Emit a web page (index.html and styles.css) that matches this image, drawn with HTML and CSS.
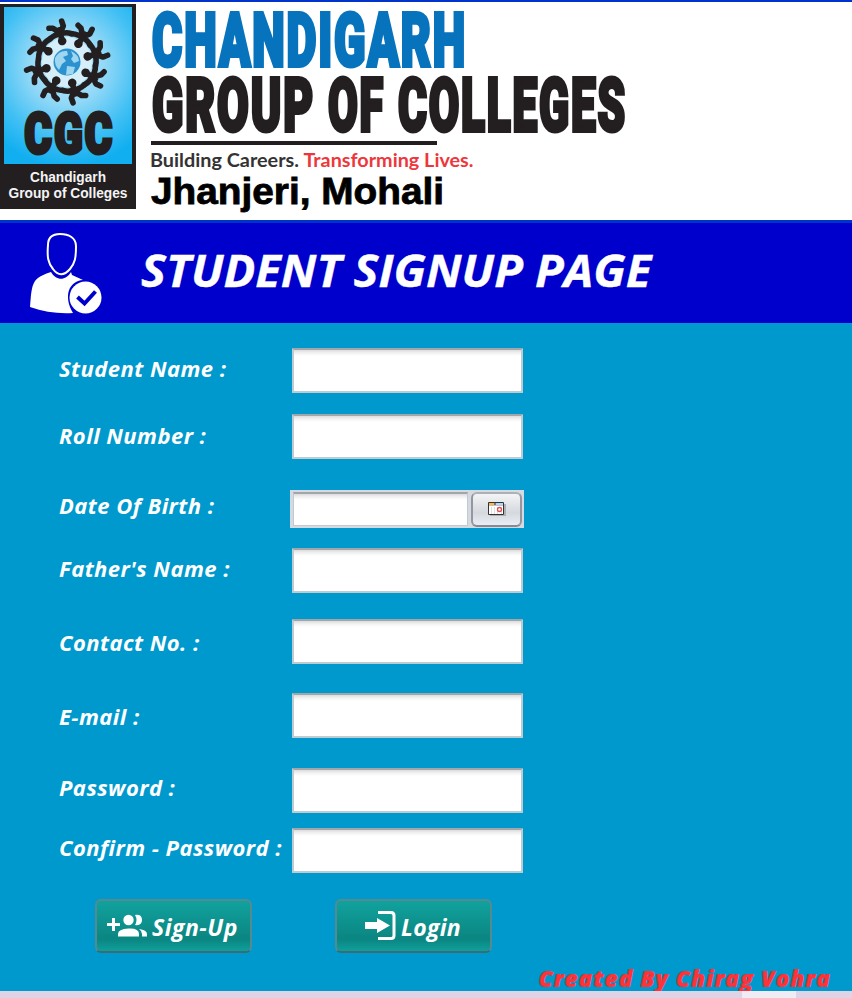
FILE: index.html
```html
<!DOCTYPE html>
<html lang="en">
<head>
<meta charset="utf-8">
<title>Student Signup Page</title>
<link rel="stylesheet" href="styles.css">
</head>
<body>
<header class="brand">
  <svg class="brand-art" width="852" height="217" viewBox="0 3 852 217" role="img" aria-label="Chandigarh Group of Colleges">
    <defs>
      <radialGradient id="sky" gradientUnits="userSpaceOnUse" cx="67" cy="66" r="100">
        <stop offset="0" stop-color="#c5eafa"/><stop offset=".38" stop-color="#91d8f7"/><stop offset=".72" stop-color="#42c0f4"/><stop offset="1" stop-color="#12aff0"/>
      </radialGradient>
      <g id="person">
        <circle cx="0" cy="-21.500" r="4.300"/>
        <path d="M-11 -26.500Q-5 -30 0 -28.500Q5 -30 11 -26.500M0 -24V-33M-1 -31L-6 -36L-10 -37M1 -31L4.500 -36L4 -41" fill="none" stroke="#231f20" stroke-width="5.600" stroke-linecap="round" stroke-linejoin="round"/>
      </g>
    </defs>
    <path fill="#231f20" d="M0 4h136v205H0z"/>
    <path fill="url(#sky)" d="M4 7h128v157H4z"/>
    <circle cx="67" cy="62" r="25" fill="#d5effa"/>
    <g fill="#231f20" transform="translate(67 62)">
      <use href="#person" transform="rotate(-13)"/><use href="#person" transform="rotate(32)"/><use href="#person" transform="rotate(75)"/><use href="#person" transform="rotate(120)"/><use href="#person" transform="rotate(166)"/><use href="#person" transform="rotate(210)"/><use href="#person" transform="rotate(253)"/><use href="#person" transform="rotate(300)"/>
    </g>
    <circle cx="67" cy="62" r="13.500" fill="#2b92cf"/>
    <path fill="#9fd6f0" d="M55 58q4-8 12-7l1 4-5 2 3 4-4 3-3 6q-5-5-4-12zM71 51q8 4 8 10l-5 2-3-4 2-3zM67 66l8 1-2 7-7 1z"/>
    <g class="heavy" fill="#231f20" stroke="#231f20">
      <text x="24.500" y="153" font-size="55" stroke-width="4" textLength="90" lengthAdjust="spacingAndGlyphs">CGC</text>
    </g>
    <g class="sans" fill="#f4f4f4">
      <text x="30" y="182" font-size="14" textLength="76" lengthAdjust="spacingAndGlyphs">Chandigarh</text>
      <text x="8.500" y="198" font-size="14.500" textLength="119" lengthAdjust="spacingAndGlyphs">Group of Colleges</text>
    </g>
    <g class="heavy" font-size="74" stroke-width="4">
      <text x="152" y="66" fill="#0873bd" stroke="#0873bd" textLength="315" lengthAdjust="spacingAndGlyphs">CHANDIGARH</text>
      <g fill="#231f20" stroke="#231f20">
        <text x="152" y="131" textLength="163" lengthAdjust="spacingAndGlyphs">GROUP</text>
        <text x="328" y="131" textLength="57" lengthAdjust="spacingAndGlyphs">OF</text>
        <text x="398" y="131" textLength="229" lengthAdjust="spacingAndGlyphs">COLLEGES</text>
      </g>
    </g>
    <path fill="#231f20" d="M151 141h286v4H151z"/>
    <g class="humanist">
      <text x="150" y="167" font-size="18.500" fill="#333" textLength="149" lengthAdjust="spacingAndGlyphs">Building Careers.</text>
      <text x="303.500" y="167" font-size="18.500" fill="#ed373b" textLength="170" lengthAdjust="spacingAndGlyphs">Transforming Lives.</text>
    </g>
    <text class="sans place" x="151" y="204" font-size="36" textLength="293" lengthAdjust="spacingAndGlyphs">Jhanjeri, Mohali</text>
  </svg>
</header>
<section class="hero">
  <svg class="hero-icon" width="76" height="84" viewBox="28 231 76 84" aria-hidden="true">
    <path d="M60 234c9 0 16 4 16 12 0 12-1 17-6 23-6 7-12 7-17 0-5-6-6-12-5-24 0-8 5-11 12-11z" fill="none" stroke="#fff" stroke-width="2"/>
    <path fill="#fff" d="M51 272c5 9 15 9 20 0l1 3 11 5c-14 1-20 16-10 33-14 1-29-1-43-6 1-11 1-20 5-26 4-5 10-7 16-9z"/>
    <circle cx="85.500" cy="297.500" r="16" fill="#fff"/>
    <path d="M77.500 297l7 6.500 11-12" fill="none" stroke="#0000cd" stroke-width="4"/>
  </svg>
  <h1>STUDENT SIGNUP PAGE</h1>
</section>
<main>
  <form class="signup">
    <div class="row r-name"><label for="name">Student Name :</label><input id="name"></div>
    <div class="row r-roll"><label for="roll">Roll Number :</label><input id="roll"></div>
    <div class="row r-dob"><label for="dob">Date Of Birth :</label>
      <div class="date"><input id="dob"><button type="button" aria-label="Choose date">
        <svg width="18" height="15" viewBox="0 0 18 15"><path fill="#aeb0b5" d="M2 2h16v12H2z"/><path fill="#fff" stroke="#333" d="M.5 .5h15v12H.5z"/><path fill="#ffb83d" d="M1 1h5v2H1z"/><path fill="#777" d="M6 1h2v2H6z"/><path fill="#add6ff" d="M8 1h7v2H8z"/><path fill="#c2c2c2" d="M1 3h14v1H1z"/><path stroke="#dedede" d="M3.500 5v7M6.500 5v7M9.500 5v7M13.500 5v7"/><circle cx="11.500" cy="7.500" r="2" fill="#fff" stroke="#e24b50" stroke-width="1.300"/></svg>
      </button></div></div>
    <div class="row r-father"><label for="father">Father's Name :</label><input id="father"></div>
    <div class="row r-contact"><label for="contact">Contact No. :</label><input id="contact"></div>
    <div class="row r-email"><label for="email">E-mail :</label><input id="email"></div>
    <div class="row r-pass"><label for="pass">Password :</label><input id="pass" type="password"></div>
    <div class="row r-confirm"><label for="confirm">Confirm - Password :</label><input id="confirm" type="password"></div>
    <div class="actions">
      <button type="button" class="action join">
        <svg width="42" height="24" viewBox="0 0 42 24" fill="#fff"><path d="M6 4h3v5h5v3H9v5H6v-5H1V9h5z"/><circle cx="22.500" cy="6" r="5.200"/><path d="M12 22.500v-2.500q0-5 10.500-5.500T33 20v2.500zM29 1q7-1 7 5t-7 5q3-5 0-10zM33 15q8 1 8 5v2.500h-5v-2.500q0-3-3-5z"/></svg>
        <span>Sign-Up</span>
      </button>
      <button type="button" class="action login">
        <svg width="32" height="32" viewBox="0 0 32 32"><path fill="none" stroke="#fff" stroke-width="3" d="M13 2.500h13q3 0 3 3v20q0 3-3 3H13"/><path fill="#fff" d="M0 12h12V8l13 7.500L12 23v-4H0z"/></svg>
        <span>Login</span>
      </button>
    </div>
  </form>
  <p class="credit">Created By Chirag Vohra</p>
</main>
<footer class="strip"><i></i></footer>
</body>
</html>
```
FILE: styles.css
```css
* { box-sizing: border-box; }
body { margin: 0; width: 852px; height: 998px; overflow: hidden; display: flex; flex-direction: column; background: #0099cd; font-family: "Open Sans", "Noto Sans", sans-serif; }
.brand { height: 223px; border-top: 2px solid #0033cc; border-bottom: 3px solid #0033cc; background: #fff; padding-top: 1px; flex: none; }
.brand-art { display: block; }
.heavy { font-family: Roboto, sans-serif; font-weight: 900; letter-spacing: 3px; }
.sans { font-family: "Liberation Sans", sans-serif; font-weight: 700; }
.humanist { font-family: Lato, sans-serif; font-weight: 700; }
.place { stroke: #000; stroke-width: .8px; }
.hero { height: 100px; flex: none; background: #0000cd; display: flex; align-items: flex-start; padding: 8px 0 0 28px; }
.hero-icon { flex: none; }
h1 { margin: 7px 0 0 37px; color: #fff; font-size: 44.5px; line-height: 64px; font-weight: 700; font-style: italic; white-space: nowrap; transform: scaleX(1.058); transform-origin: 0 0; -webkit-text-stroke: .4px #fff; }
main { flex: 1; min-height: 0; overflow: hidden; padding: 25px 0 0 59px; }
.signup { display: flex; flex-direction: column; }
.row { display: grid; grid-template-columns: 233px 231px; height: 45px; align-items: start; }
label { color: #fff; font-size: 22px; line-height: 28px; font-weight: 700; font-style: italic; white-space: nowrap; letter-spacing: .45px; }
input { display: block; width: 100%; height: 45px; border: 2px solid #bdcbd3; border-top-color: #a1a6ab; border-radius: 1px; background: linear-gradient(#dcdcdc, #f2f2f2 3px, #fff 6px); padding: 4px 6px; outline: 0; font: 18px "Open Sans", sans-serif; }
.r-name label, .r-father label { margin-top: 6px; }
.r-roll { margin-top: 21px; }
.r-roll label { margin-top: 7px; }
.r-dob { margin-top: 31px; height: 38px; }
.r-dob label { margin-top: 1px; }
.r-father { margin-top: 20px; }
.r-contact { margin-top: 26px; }
.r-contact label, .r-email label { margin-top: 9px; }
.r-email { margin-top: 29px; }
.r-pass { margin-top: 30px; }
.r-pass label, .r-confirm label { margin-top: 5px; }
.r-confirm { margin-top: 15px; }
.date { width: 234px; height: 38px; margin-left: -2px; padding: 2px 2px 1px 3px; background: #d6d9df; display: flex; justify-content: space-between; }
.date input { width: 175px; height: 34px; border-width: 2px 1px 1px; border-radius: 0; }
.date button { width: 51px; height: 35px; padding: 0; border: 2px solid #9497a0; border-top-color: #adb0b7; border-bottom-color: #868a95; border-radius: 6px; background: linear-gradient(#f3f4f6, #d5d8dd 60%, #e9edf5); display: grid; place-items: center; }
.actions { display: flex; gap: 83px; margin: 26px 0 0 36px; }
.action { width: 157px; height: 54px; border: 2px solid #548b90; border-bottom-color: #3c6b75; border-radius: 6px; background: linear-gradient(#11a29e, #0b8783 72%, #0b8783 78%, #10a09c); display: flex; align-items: center; padding: 0; color: #fff; font: italic 700 23px/30px "Open Sans", sans-serif; letter-spacing: .5px; }
.join { padding-left: 9px; }
.join span, .login span { margin: 2px 0 0 4px; }
.login { padding-left: 28px; letter-spacing: .3px; }
.credit { margin: 11px 0 0 480px; color: #ff3238; font-size: 22px; line-height: 28px; font-weight: 800; font-style: italic; letter-spacing: 1.3px; white-space: nowrap; text-shadow: -1px 0 #8f5564; }
.strip { flex: none; height: 7px; background: #dfd3e5; padding-left: 742px; }
.strip i { display: block; width: 54px; height: 7px; background: #f1ebf3; }
```
